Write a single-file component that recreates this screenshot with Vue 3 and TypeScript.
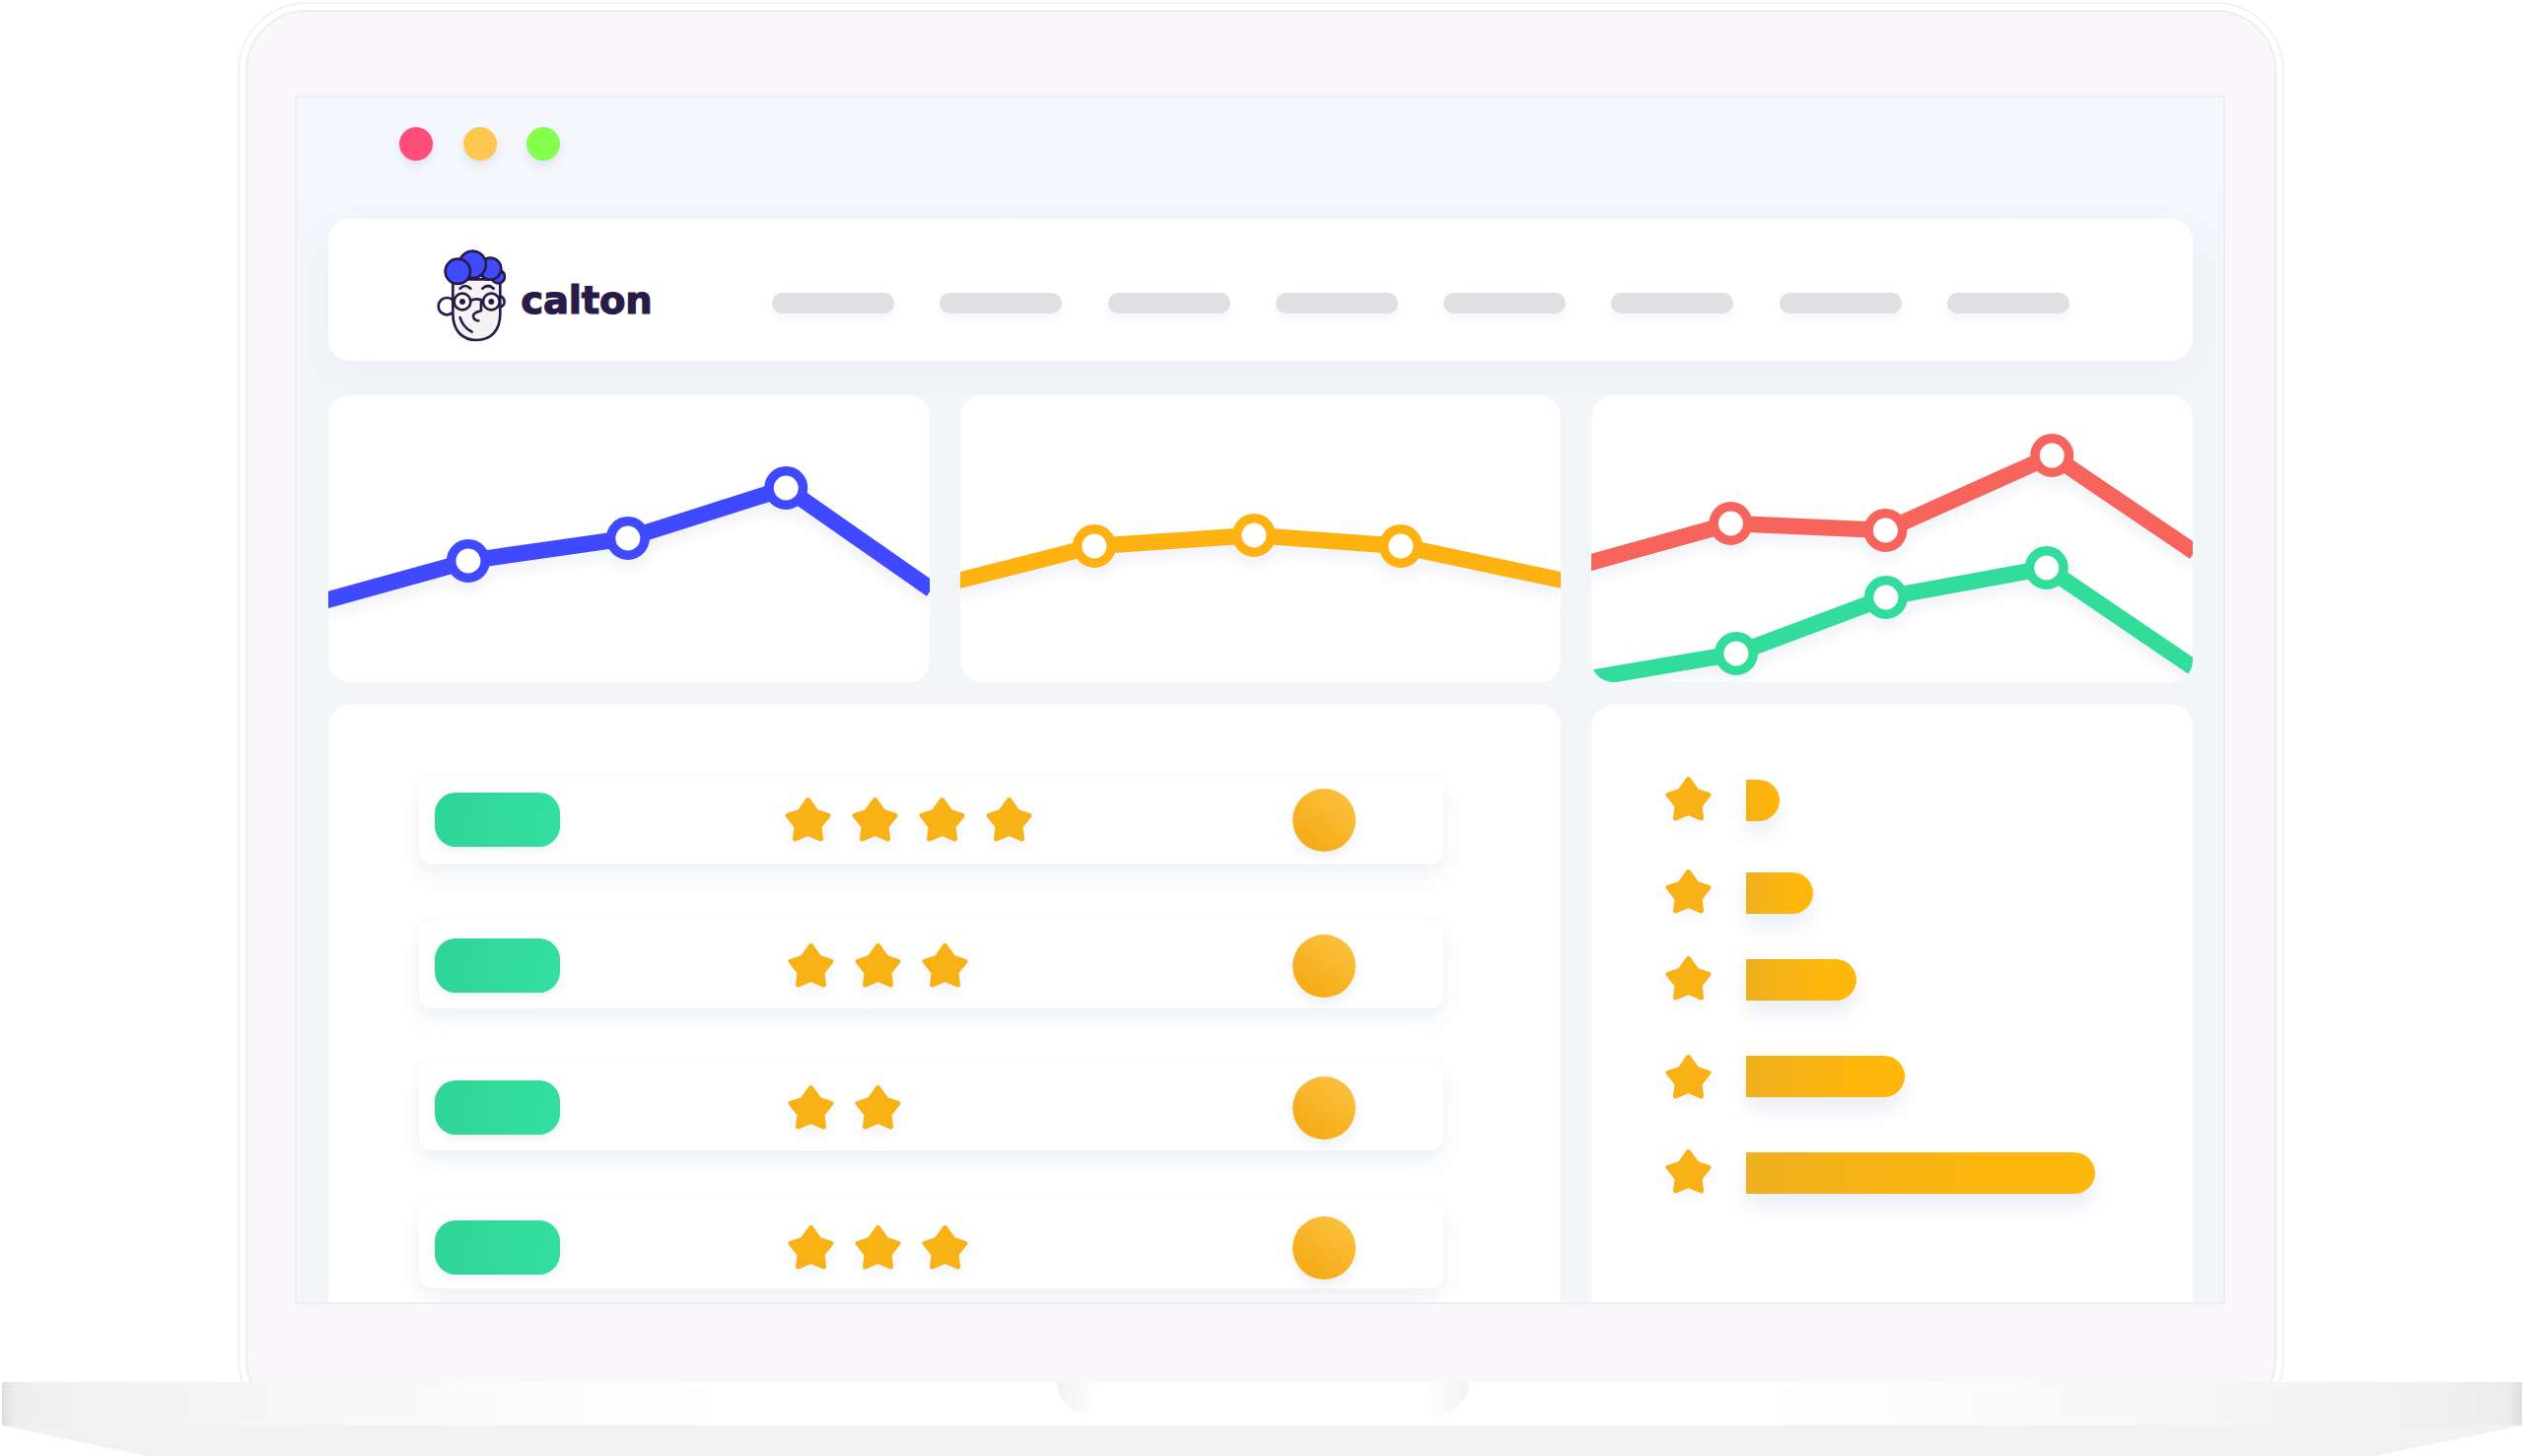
<script setup lang="ts">
interface Series {
  color: string
  points: [number, number][]
}

const navItems: number[] = [1, 2, 3, 4, 5, 6, 7, 8]

const charts: Series[][] = [
  [{ color: '#3f49ff', points: [[-2, 208], [142, 168], [304, 145], [464.5, 94], [612, 197]] }],
  [{ color: '#fdb212', points: [[-2, 188], [136, 153], [298, 142], [447, 153], [612, 188]] }],
  [
    { color: '#f6645c', points: [[-2, 170], [141.5, 130], [298.5, 137], [467.5, 61], [612, 159]] },
    { color: '#32dc9b', points: [[-6, 288], [147, 262], [299, 205], [462, 175], [612, 277]] },
  ],
]

const ratingRows: number[] = [4, 3, 2, 3]
const bars: number[] = [34, 68, 112, 161, 354]

const starPoints = '24.5,3.5 33,15.5 45,19.3 36,30.5 37.5,43 24.5,37.5 11.5,43 13,30.5 4,19.3 16,15.5'

function toPolyline(points: [number, number][]): string {
  return points.map((p) => p.join(',')).join(' ')
}
</script>

<template>
  <div class="page">
    <div class="lid-area">
      <div class="lid">
        <div class="screen">
          <div class="titlebar">
            <span class="dot dot-red"></span>
            <span class="dot dot-yellow"></span>
            <span class="dot dot-green"></span>
          </div>

          <div class="topbar">
            <div class="brand">
              <svg class="face" viewBox="60 30 220 300" aria-hidden="true">
                <g stroke="#2a1a47" stroke-width="8" stroke-linecap="round" stroke-linejoin="round">
                  <circle cx="100" cy="212" r="26" fill="#fff" />
                  <circle cx="258" cy="198" r="17" fill="#fff" />
                  <path d="M118 130 L118 235 C118 290 150 315 190 315 C235 315 262 285 262 235 L262 130 Z" fill="#f4f4f5" />
                  <circle cx="256" cy="122" r="20" fill="#3d4cff" />
                  <circle cx="232" cy="98" r="33" fill="#3d4cff" />
                  <circle cx="178" cy="85" r="41" fill="#3d4cff" />
                  <circle cx="133" cy="106" r="38" fill="#3d4cff" />
                  <circle cx="147" cy="198" r="25" fill="#fff" />
                  <circle cx="235" cy="198" r="25" fill="#fff" />
                  <path d="M172 195 Q190 185 210 195" fill="none" />
                  <path d="M140 158 Q155 142 172 158" fill="#e4e4e6" />
                  <path d="M208 158 Q225 142 242 158" fill="#e4e4e6" />
                  <path d="M204 200 L204 226 Q178 232 180 244 Q184 256 196 256" fill="none" />
                  <path d="M140 246 C146 268 160 282 176 290" fill="none" />
                </g>
                <circle cx="147" cy="198" r="9" fill="#2a1a47" />
                <circle cx="235" cy="198" r="9" fill="#2a1a47" />
              </svg>
              <span class="wordmark">calton</span>
            </div>
            <div class="nav">
              <span v-for="item in navItems" :key="item" class="nav-pill"></span>
            </div>
          </div>

          <div class="dashboard">
            <div v-for="(chart, c) in charts" :key="c" class="card chart-card">
              <svg class="chart" viewBox="0 0 610 291" aria-hidden="true">
                <g v-for="series in chart" :key="series.color">
                  <polyline
                    class="line"
                    :points="toPolyline(series.points)"
                    :stroke="series.color"
                  />
                  <circle
                    v-for="point in series.points.slice(1, 4)"
                    :key="point[0]"
                    class="ring"
                    :cx="point[0]"
                    :cy="point[1]"
                    :stroke="series.color"
                    r="17.25"
                  />
                </g>
              </svg>
            </div>

            <div class="card list-card">
              <div v-for="(count, r) in ratingRows" :key="r" class="rating-row">
                <div class="rating-inner">
                  <span class="tag"></span>
                  <div class="stars">
                    <svg v-for="s in count" :key="s" class="star" viewBox="0 0 49 47" aria-hidden="true">
                      <polygon :points="starPoints" />
                    </svg>
                  </div>
                  <span class="coin"></span>
                </div>
              </div>
            </div>

            <div class="card bars-card">
              <div v-for="(width, b) in bars" :key="b" class="bar-row">
                <svg class="star" viewBox="0 0 49 47" aria-hidden="true">
                  <polygon :points="starPoints" />
                </svg>
                <span class="bar" :style="{ width: width + 'px' }"></span>
              </div>
            </div>
          </div>
        </div>
      </div>
    </div>

    <div class="base">
      <div class="notch"></div>
    </div>
    <div class="foot"></div>
  </div>
</template>

<style scoped>
.page {
  width: 2560px;
  height: 1477px;
  overflow: hidden;
  background: #fff;
}

.lid-area {
  height: 1402px;
  padding-top: 10px;
  box-sizing: border-box;
  overflow: hidden;
}

.lid {
  box-sizing: border-box;
  width: 2060px;
  height: 1430px;
  margin-left: 249px;
  padding: 85px 50px 0 48px;
  background: #f9f7f9;
  border: 2px solid #ededee;
  border-radius: 62px;
  box-shadow: 0 0 0 6px #fff, 0 0 0 8px #f2f2f2;
}

.screen {
  box-sizing: border-box;
  height: 1226px;
  overflow: hidden;
  padding: 0 31px 0 33px;
  border: 2px solid #eeedf0;
  background: linear-gradient(180deg, #f4f7fc 0, #f4f7fc 90px, #f3f5f9 170px, #f3f5f8 100%);
}

.titlebar {
  display: flex;
  gap: 30.5px;
  height: 123px;
  box-sizing: border-box;
  padding: 30px 0 0 71px;
}

.dot {
  width: 34px;
  height: 34px;
  border-radius: 50%;
  box-shadow: 0 5px 8px rgba(120, 130, 170, 0.16);
}
.dot-red { background: #ff4d79; }
.dot-yellow { background: #ffc74f; }
.dot-green { background: #85ff4d; }

.topbar {
  display: flex;
  align-items: flex-start;
  height: 144px;
  margin-left: -1px;
  background: #fff;
  border-radius: 22px;
  box-shadow: 0 12px 34px rgba(130, 140, 170, 0.06);
}

.brand {
  display: flex;
  align-items: flex-start;
  width: 450px;
  padding: 28px 0 0 107px;
  box-sizing: border-box;
}

.face {
  width: 73.3px;
  height: 100px;
  flex: none;
}

.wordmark {
  margin: 31px 0 0 15px;
  font-family: "DejaVu Sans", sans-serif;
  font-weight: 700;
  font-size: 38.5px;
  line-height: 48px;
  letter-spacing: -0.2px;
  color: #2a1a47;
  -webkit-text-stroke: 1.2px #2a1a47;
}

.nav {
  display: flex;
  gap: 46.3px;
  margin-top: 75px;
}

.nav-pill {
  width: 124px;
  height: 21px;
  border-radius: 11px;
  background: #e0dfe3;
  box-shadow: 0 6px 8px rgba(130, 130, 160, 0.07);
}

.dashboard {
  display: grid;
  grid-template-columns: repeat(3, 1fr);
  grid-template-rows: 291px 700px;
  column-gap: 31px;
  row-gap: 23px;
  margin: 35px 0 0 -1px;
}

.card {
  background: #fff;
  border-radius: 22px;
  overflow: hidden;
}

.chart {
  display: block;
  width: 100%;
  height: 100%;
  filter: drop-shadow(0 9px 7px rgba(110, 130, 190, 0.1));
}

.line {
  fill: none;
  stroke-width: 16.5;
  stroke-linejoin: miter;
}

.ring {
  fill: #fff;
  stroke-width: 9.5;
}

.list-card {
  grid-column: span 2;
  padding: 73px 119px 0 92px;
}

.rating-row {
  height: 89px;
  box-sizing: border-box;
  padding-top: 16px;
  background: #fff;
  border-radius: 14px;
  box-shadow: 0 12px 20px rgba(120, 140, 170, 0.1), 0 0 12px rgba(120, 140, 170, 0.03);
}
.rating-row:nth-child(2) {
  height: 90px;
  margin-top: 56px;
  padding-top: 19px;
}
.rating-row:nth-child(3) {
  height: 90px;
  margin-top: 54px;
  padding-top: 19px;
}
.rating-row:nth-child(4) {
  height: 90px;
  margin-top: 50px;
  padding-top: 21px;
}

.rating-inner {
  display: grid;
  grid-template-columns: 370px 516px 64px;
  grid-template-rows: 55px;
  align-items: center;
  height: 55px;
}

.tag {
  width: 127px;
  height: 55px;
  margin-left: 16px;
  border-radius: 21px;
  background: linear-gradient(100deg, #2fd497, #33df9f);
  box-shadow: 0 4px 8px rgba(100, 130, 160, 0.1);
}

.stars {
  display: flex;
  gap: 19px;
}
.rating-row:nth-child(n + 2) .stars {
  margin-left: 3px;
}

.star {
  display: block;
  flex: none;
  width: 49px;
  height: 47px;
  filter: drop-shadow(0 6px 7px rgba(120, 140, 190, 0.1));
}
.star polygon {
  fill: #f8b216;
  stroke: #f8b216;
  stroke-width: 5;
  stroke-linejoin: round;
}

.coin {
  width: 64px;
  height: 64px;
  border-radius: 50%;
  background: linear-gradient(215deg, #fdc445, #f3a60c);
  box-shadow: 0 6px 12px rgba(120, 140, 180, 0.14);
}

.bars-card {
  padding: 72px 0 0 74px;
}

.bar-row {
  display: flex;
  align-items: center;
  gap: 34px;
  height: 47px;
}
.bar-row:nth-child(2) { margin-top: 47px; }
.bar-row:nth-child(3) { margin-top: 41px; }
.bar-row:nth-child(4) { margin-top: 53px; }
.bar-row:nth-child(5) { margin-top: 49px; }

.bar {
  height: 42px;
  margin-top: 2px;
  border-radius: 0 21px 21px 0;
  background: linear-gradient(90deg, #efb01f, #ffb70c 70%);
  box-shadow: 0 12px 20px rgba(110, 130, 190, 0.14);
}
.bar-row:nth-child(1) .bar {
  background: linear-gradient(90deg, #f5b015, #ffb70c);
}
.bar-row:nth-child(4) .bar {
  margin-top: 0;
  margin-bottom: 2px;
}

.base {
  position: relative;
  height: 44px;
  margin: 0 2px;
  background: linear-gradient(90deg, #dedede 0, #eeeeee 14px, #f2f2f2 90px, #f7f7f7 320px, #fdfdfd 620px, #fff 820px, #fff calc(100% - 820px), #fcfcfc calc(100% - 620px), #f6f6f6 calc(100% - 320px), #f0f0f0 calc(100% - 90px), #ececec calc(100% - 14px), #dedede 100%);
}

.notch {
  position: absolute;
  top: 0;
  left: 1070px;
  width: 418px;
  height: 33px;
  border-radius: 0 0 34px 34px;
  background: linear-gradient(90deg, #f3f3f3, #fff 45px, #fff calc(100% - 45px), #f3f3f3);
}

.foot {
  height: 31px;
  background: #f1f1f1;
  clip-path: polygon(2px 0, 2558px 0, 2409px 100%, 148px 100%);
}
</style>

<style>
html,
body {
  margin: 0;
  background: #fff;
}
</style>
